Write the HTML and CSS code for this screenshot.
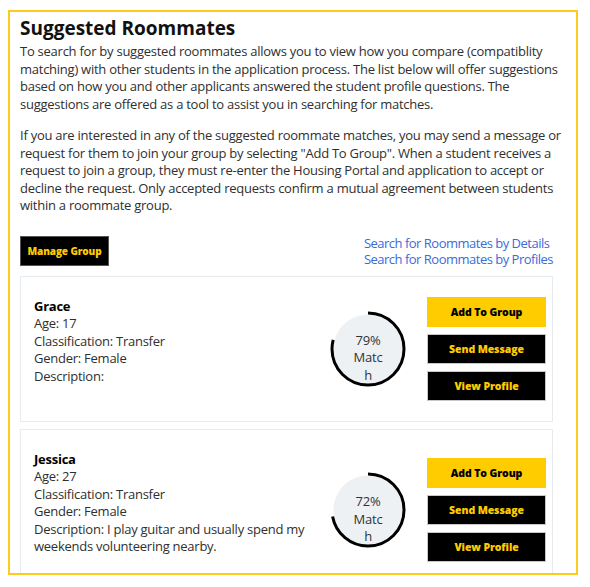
FILE: index.html
```html
<!DOCTYPE html>
<html lang="en">
<head>
    <meta charset="UTF-8">
    <meta name="viewport" content="width=device-width, initial-scale=1.0">
    <title>Suggested Roommates</title>
    <link rel="stylesheet" href="styles.css">
</head>
<body>
    <div class="panel">
        <h1>Suggested Roommates</h1>
        <p>To search for by suggested roommates allows you to view how you compare (compatiblity matching) with other students in the application process. The list below will offer suggestions based on how you and other applicants answered the student profile questions. The suggestions are offered as a tool to assist you in searching for matches.</p>
        <p>If you are interested in any of the suggested roommate matches, you may send a message or request for them to join your group by selecting "Add To Group". When a student receives a request to join a group, they must re-enter the Housing Portal and application to accept or decline the request. Only accepted requests confirm a mutual agreement between students within a roommate group.</p>

        <div class="toolbar">
            <button class="btn btn-dark btn-manage">Manage Group</button>
            <div class="links">
                <a href="#">Search for Roommates by Details</a>
                <a href="#">Search for Roommates by Profiles</a>
            </div>
        </div>

        <div class="card">
            <div class="info">
                <div class="name">Grace</div>
                <div>Age: 17</div>
                <div>Classification: Transfer</div>
                <div>Gender: Female</div>
                <div>Description: </div>
            </div>
            <div class="match-col">
                <div class="match">
                    <svg viewBox="0 0 76 76" width="76" height="76">
                        <circle cx="38" cy="38" r="36" fill="none" stroke="#000" stroke-width="3"
                            stroke-dasharray="178.7 226.2" transform="rotate(-90 38 38)"/>
                    </svg>
                    <div class="match-text">79% Match</div>
                </div>
            </div>
            <div class="actions">
                <button class="btn btn-yellow">Add To Group</button>
                <button class="btn btn-dark">Send Message</button>
                <button class="btn btn-dark">View Profile</button>
            </div>
        </div>

        <div class="card">
            <div class="info">
                <div class="name">Jessica</div>
                <div>Age: 27</div>
                <div>Classification: Transfer</div>
                <div>Gender: Female</div>
                <div>Description: I play guitar and usually spend my weekends volunteering nearby.</div>
            </div>
            <div class="match-col">
                <div class="match">
                    <svg viewBox="0 0 76 76" width="76" height="76">
                        <circle cx="38" cy="38" r="36" fill="none" stroke="#000" stroke-width="3"
                            stroke-dasharray="162.9 226.2" transform="rotate(-90 38 38)"/>
                    </svg>
                    <div class="match-text">72% Match</div>
                </div>
            </div>
            <div class="actions">
                <button class="btn btn-yellow">Add To Group</button>
                <button class="btn btn-dark">Send Message</button>
                <button class="btn btn-dark">View Profile</button>
            </div>
        </div>
    </div>
</body>
</html>
```

FILE: styles.css
```css
body {
    margin: 10px 8px;
    font-family: "Open Sans", "Liberation Sans", sans-serif;
    font-size: 13px;
    letter-spacing: -0.25px;
    color: #2f2f2f;
    background: #fff;
}
.panel {
    box-sizing: border-box;
    width: 570px;
    height: 565px;
    overflow: hidden;
    border: 2px solid #fccb1c;
    padding: 5px 23px 0 10px;
}
h1 {
    margin: 0 0 4px;
    font-size: 19px;
    line-height: 22px;
    font-weight: 700;
    letter-spacing: 0;
    color: #111;
}
p {
    margin: 0 -13px 14px 0;
    line-height: 17.5px;
}
.toolbar {
    display: flex;
    justify-content: space-between;
    align-items: flex-start;
    margin-top: 20px;
    margin-bottom: 8px;
}
.links {
    display: flex;
    flex-direction: column;
}
.links a {
    color: #3a6bd8;
    text-decoration: none;
    line-height: 16.5px;
    letter-spacing: -0.5px;
}
.btn {
    box-sizing: border-box;
    display: block;
    height: 30px;
    padding: 0;
    font-family: "Open Sans", "Liberation Sans", sans-serif;
    font-size: 10.5px;
    font-weight: 800;
    letter-spacing: -0.1px;
    white-space: nowrap;
    cursor: pointer;
}
.btn-dark {
    background: #000;
    color: #ffcc00;
    border: 1px solid #c8c8c8;
}
.btn-yellow {
    background: #ffcc00;
    color: #000;
    border: 1px solid #ffcc00;
}
.btn-manage {
    width: 89px;
    margin-top: 1px;
    font-size: 10px;
    border-color: #555;
}
.card {
    display: grid;
    grid-template-columns: 1fr 118px 119px;
    align-items: center;
    border: 1px solid #e6ebf0;
    padding: 20px 6px 20px 13px;
    margin-bottom: 7px;
}
.info {
    align-self: start;
    padding: 1px 0 15px;
    line-height: 17.5px;
}
.name {
    font-weight: 700;
    color: #000;
}
.match-col {
    display: flex;
    justify-content: center;
}
.match {
    position: relative;
    width: 76px;
    height: 76px;
    border-radius: 50%;
    background: radial-gradient(circle, #edf1f4 34px, transparent 35px);
}
.match svg {
    position: absolute;
    left: 0;
    top: 0;
}
.match-text {
    width: 32px;
    margin: 0 auto;
    padding-top: 21px;
    text-align: center;
    line-height: 17.5px;
    overflow-wrap: anywhere;
    color: #333;
}
.actions {
    display: flex;
    flex-direction: column;
    gap: 7px;
}
.actions .btn {
    width: 119px;
}
```
